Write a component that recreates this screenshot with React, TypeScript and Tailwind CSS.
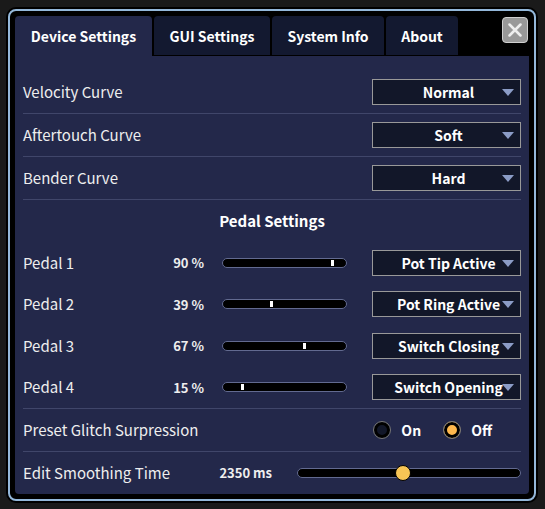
import { useState } from "react";

const tabs = [
  { name: "Device Settings", width: "w-[137px]" },
  { name: "GUI Settings", width: "w-[116px]" },
  { name: "System Info", width: "w-[112px]" },
  { name: "About", width: "w-[72px]" },
];

const curves = [
  { name: "Velocity Curve", value: "Normal" },
  { name: "Aftertouch Curve", value: "Soft" },
  { name: "Bender Curve", value: "Hard" },
];

const pedals = [
  { name: "Pedal 1", level: 90, mode: "Pot Tip Active" },
  { name: "Pedal 2", level: 39, mode: "Pot Ring Active" },
  { name: "Pedal 3", level: 67, mode: "Switch Closing" },
  { name: "Pedal 4", level: 15, mode: "Switch Opening" },
];

const curveOptions = ["Soft", "Normal", "Hard"];
const pedalOptions = ["Pot Tip Active", "Pot Ring Active", "Switch Closing", "Switch Opening"];

const rangeBase =
  "m-0 block h-[10px] appearance-none rounded-full border border-[#626a90] bg-black outline-none";

function Dropdown({ id, label, value, options }: { id: string; label?: string; value: string; options: string[] }) {
  return (
    <div className="relative w-[149px] shrink-0">
      <select
        id={id}
        aria-label={label}
        defaultValue={value}
        className="block h-[26px] w-full appearance-none border border-[#999999] bg-[#121729] pl-1 text-center text-sm leading-6 font-bold text-white outline-none"
      >
        {options.map((o) => (
          <option key={o}>{o}</option>
        ))}
      </select>
      <svg className="pointer-events-none absolute top-[10px] right-[7px]" width="12" height="7" viewBox="0 0 12 7" aria-hidden="true">
        <path d="M0 0h12L6 7z" fill="#8b9cc6" />
      </svg>
    </div>
  );
}

function PedalRow({ name, level, mode }: { name: string; level: number; mode: string }) {
  const [value, setValue] = useState(level);
  const id = name.replace(" ", "-").toLowerCase();
  return (
    <div className="flex items-center">
      <label htmlFor={id} className="flex-1">{name}</label>
      <output htmlFor={id} className="mr-[18px] text-[13px] font-bold">{value} %</output>
      <input
        id={id}
        type="range"
        value={value}
        onChange={(e) => setValue(Number(e.target.value))}
        className={`${rangeBase} mr-[25px]! w-[125px] [&::-webkit-slider-thumb]:h-[6px] [&::-webkit-slider-thumb]:w-[3px] [&::-webkit-slider-thumb]:appearance-none [&::-webkit-slider-thumb]:bg-white`}
      />
      <Dropdown id={`${id}-mode`} label={`${name} mode`} value={mode} options={pedalOptions} />
    </div>
  );
}

export default function App() {
  const [tab, setTab] = useState("Device Settings");
  const [glitch, setGlitch] = useState("Off");
  const [time, setTime] = useState(2350);

  return (
    <div className="min-h-screen bg-[#1a1a1a] pt-[7px] pr-[7px] pb-[6px] pl-[6px] font-['Noto_Sans_CJK_SC','Noto_Sans',sans-serif] text-[15px] text-[#eeeeee]">
      <div className="rounded-[10px] bg-black p-[2px]">
        <div className="rounded-lg border-2 border-[#94b8da] p-[5px]">
          <header className="flex h-10 justify-between">
            <div role="tablist" className="flex gap-[2px]">
              {tabs.map((t) => (
                <button
                  key={t.name}
                  role="tab"
                  aria-selected={tab === t.name}
                  onClick={() => setTab(t.name)}
                  className={`${t.width} rounded-t text-sm font-bold whitespace-nowrap text-white ${
                    tab === t.name ? "h-10 bg-[#23284a]" : "h-[39px] bg-[#131930]"
                  }`}
                >
                  {t.name}
                </button>
              ))}
            </div>
            <button
              aria-label="Close"
              className="mt-px mr-px flex size-[26px] items-center justify-center rounded border border-[#d0d0d0] bg-[#999999]"
            >
              <svg width="14" height="14" viewBox="0 0 14 14" aria-hidden="true">
                <path d="M1.5 1.5l11 11M12.5 1.5l-11 11" stroke="#eeeeee" strokeWidth="2.5" strokeLinecap="round" />
              </svg>
            </button>
          </header>

          <main className="rounded-b bg-[#23284a] px-2 pt-[15px]">
            {curves.map((c) => {
              const id = c.name.replace(" ", "-").toLowerCase();
              return (
                <div key={c.name} className="flex h-[43px] items-center justify-between border-b border-[#40466a]">
                  <label htmlFor={id}>{c.name}</label>
                  <Dropdown id={id} value={c.value} options={curveOptions} />
                </div>
              );
            })}

            <section className="border-b border-[#40466a]">
              <h2 className="flex h-[42px] items-center justify-center font-bold text-white">Pedal Settings</h2>
              <div className="grid h-[166px] grid-rows-4">
                {pedals.map((p) => (
                  <PedalRow key={p.name} {...p} />
                ))}
              </div>
            </section>

            <div role="radiogroup" aria-labelledby="glitch" className="flex h-[43px] items-center border-b border-[#40466a] pr-[29px]">
              <span id="glitch" className="flex-1">Preset Glitch Surpression</span>
              <div className="flex gap-[22px]">
                {["On", "Off"].map((o) => (
                  <label key={o} className="flex items-center gap-[10px] text-sm font-bold text-white">
                    <input
                      type="radio"
                      name="glitch"
                      checked={glitch === o}
                      onChange={() => setGlitch(o)}
                      className="size-[18px] appearance-none rounded-full border border-[#777777] bg-[#121729] shadow-[inset_0_0_0_3px_#000] checked:bg-[#ffb84d]"
                    />
                    {o}
                  </label>
                ))}
              </div>
            </div>

            <div className="flex h-[42px] items-center">
              <label htmlFor="smoothing" className="flex-1">Edit Smoothing Time</label>
              <output htmlFor="smoothing" className="mr-[25px] text-[13px] font-bold">{time} ms</output>
              <input
                id="smoothing"
                type="range"
                min={0}
                max={5000}
                step={10}
                value={time}
                onChange={(e) => setTime(Number(e.target.value))}
                className={`${rangeBase} w-[224px] [&::-webkit-slider-thumb]:size-4 [&::-webkit-slider-thumb]:appearance-none [&::-webkit-slider-thumb]:rounded-full [&::-webkit-slider-thumb]:border [&::-webkit-slider-thumb]:border-black [&::-webkit-slider-thumb]:bg-[#f8c555]`}
              />
            </div>
          </main>
        </div>
      </div>
    </div>
  );
}
